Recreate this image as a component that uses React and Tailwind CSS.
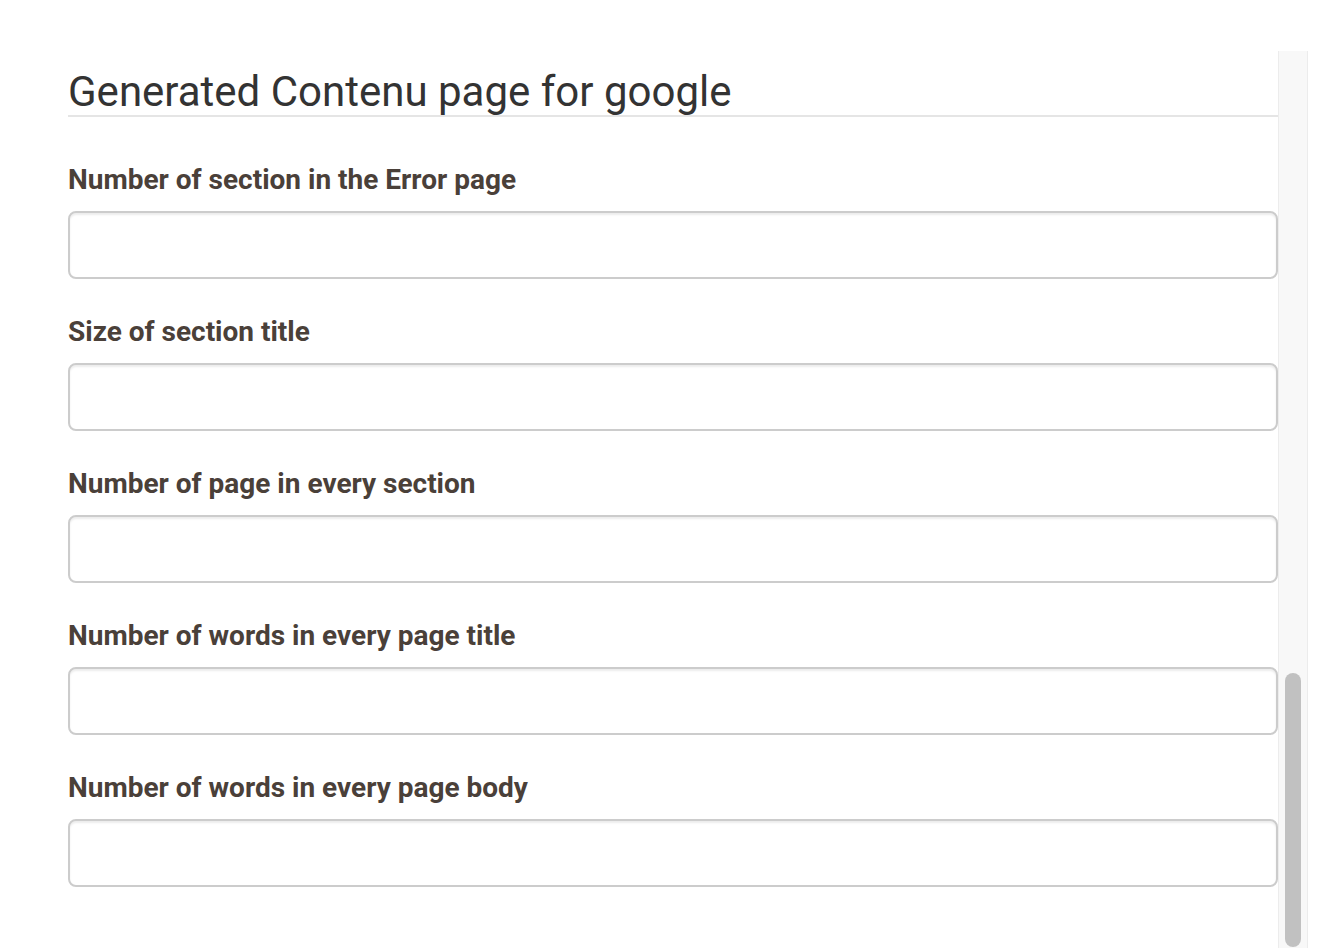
import React from "react";

const fields = [
  "Number of section in the Error page",
  "Size of section title",
  "Number of page in every section",
  "Number of words in every page title",
  "Number of words in every page body",
];

export default function App() {
  return (
    <div className="flex h-[948px] w-[1332px] overflow-hidden bg-white" style={{ fontFamily: "Roboto, 'Liberation Sans', sans-serif" }}>
      <div className="w-[68px] shrink-0" />
      <div className="w-[1210px] shrink-0">
        <h1 className="mt-[69px] border-b-2 border-[#e5e5e5] text-[42px] font-normal leading-[46px] text-[#333333]">
          Generated Contenu page for google
        </h1>
        <div className="mt-[44px] flex flex-col gap-[34px]">
          {fields.map((f) => (
            <div key={f} className="flex flex-col">
              <label className="mb-[13px] pt-px text-[28px] font-bold leading-[36px] text-[#4a4039]">{f}</label>
              <input
                type="text"
                className="h-[68px] w-full rounded-[8px] border-2 border-[#cccccc] bg-white shadow-[inset_0_2px_2px_rgba(0,0,0,0.075)] outline-none"
              />
            </div>
          ))}
        </div>
      </div>
      <div className="mt-[51px] flex h-[897px] w-[30px] shrink-0 flex-col justify-end border-x border-[#ececec] bg-[#f8f8f8] pb-px">
        <div className="mx-auto h-[274px] w-[16px] rounded-full bg-[#c1c1c1]" />
      </div>
    </div>
  );
}
